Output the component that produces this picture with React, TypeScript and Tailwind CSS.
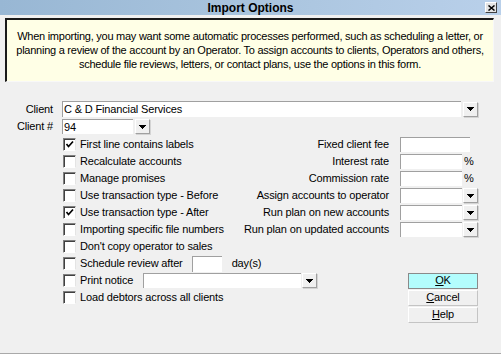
import React from 'react';

const font = "font-['Liberation_Sans',Arial,sans-serif]";

function Arrow() {
  return (
    <svg width="7" height="4" viewBox="0 0 7 4" shapeRendering="crispEdges">
      <path d="M0 0h7v1H0z M1 1h5v1H1z M2 2h3v1H2z M3 3h1v1H3z" fill="#000" />
    </svg>
  );
}

function DropBtn() {
  return (
    <div className="w-[15px] h-[15px] shrink-0 flex items-center justify-center bg-[#f0f0f0] border-t border-l border-white border-b border-r border-b-[#a0a0a0] border-r-[#a0a0a0] shadow-[1px_1px_0_#d4d4d4]">
      <Arrow />
    </div>
  );
}

function TextBox({ w, h = 15, value }: { w: number; h?: number; value?: string }) {
  return (
    <div
      className="shrink-0 bg-white border-t border-l border-[#a0a0a0] flex items-center pl-[1px] text-[11px] leading-none whitespace-nowrap overflow-hidden"
      style={{ width: w, height: h }}
    >
      {value}
    </div>
  );
}

function Combo({ w, value }: { w: number; value?: string }) {
  return (
    <div className="flex items-center gap-[1px] shrink-0">
      <TextBox w={w} value={value} />
      <DropBtn />
    </div>
  );
}

function Checkbox({ checked }: { checked?: boolean }) {
  return (
    <div className="w-[13px] h-[13px] shrink-0 bg-white border-t border-l border-[#808080] border-b border-r border-b-white border-r-[#e4e4e4] shadow-[inset_1px_1px_0_#404040] flex items-center justify-center">
      {checked && (
        <svg width="9" height="9" viewBox="0 0 9 9">
          <polyline points="1.5,4 3.5,6.5 8,1.5" fill="none" stroke="#000" strokeWidth="1.7" />
        </svg>
      )}
    </div>
  );
}

function CheckRow({ label, checked, children }: { label: string; checked?: boolean; children?: React.ReactNode }) {
  return (
    <div className="flex-1 flex items-center pl-[63px] whitespace-nowrap">
      <Checkbox checked={checked} />
      <span className="ml-[4px]">{label}</span>
      {children}
    </div>
  );
}

function RightField({ label, children }: { label: string; children: React.ReactNode }) {
  return (
    <div className="w-[266px] flex items-center justify-end pr-[23px]">
      <span className="whitespace-nowrap mr-[11px]">{label}</span>
      <div className="w-[78px] flex items-center">{children}</div>
    </div>
  );
}

function Btn({ label, hot, active }: { label: string; hot: string; active?: boolean }) {
  const rest = label.slice(1);
  return (
    <div className="w-[266px] flex justify-end pr-[23px]">
      <button
        type="button"
        className={`w-[70px] h-[16px] flex items-center justify-center text-[11px] leading-none border ${
          active ? 'bg-[#b3fdfd] border-[#8a8a8a]' : 'bg-[#f0f0f0] border-[#c4c4c4] border-t-white border-l-white'
        }`}
      >
        <span className="underline underline-offset-1">{hot}</span>
        {rest}
      </button>
    </div>
  );
}

export default function App() {
  return (
    <div className={`w-[501px] h-[354px] bg-[#f0f0f0] text-black text-[11px] tracking-[-0.15px] border-b border-[#a9a9a9] flex flex-col ${font}`}>
      {/* title bar */}
      <div className="h-[15px] flex items-center bg-linear-to-r from-[#98b7d4] via-[#a9c4de] to-[#b9d0ea]">
        <div className="w-[16px]" />
        <div className="flex-1 text-center font-bold text-[12px] leading-none tracking-normal">Import Options</div>
        <div className="w-[12px] h-[11px] mr-[4px] bg-[#e4e4e4] border border-t-white border-l-white border-b-[#404040] border-r-[#404040] flex items-center justify-center">
          <svg width="7" height="6" viewBox="0 0 7 6">
            <path d="M0.5 0.5 L6.5 5.5 M6.5 0.5 L0.5 5.5" stroke="#000" strokeWidth="1.5" />
          </svg>
        </div>
      </div>

      {/* info box */}
      <div className="mt-[3px] ml-[5px] mr-[7px] h-[64px] bg-[#ffffe6] border-t-2 border-l-2 border-[#1a1a1a] border-b border-r border-b-[#f8f8f8] border-r-[#f8f8f8] text-center leading-[14px] pt-[9px] tracking-[-0.25px] whitespace-nowrap">
        When importing, you may want some automatic processes performed, such as scheduling a letter, or
        <br />
        planning a review of the account by an Operator. To assign accounts to clients, Operators and others,
        <br />
        schedule file reviews, letters, or contact plans, use the options in this form.
      </div>

      {/* client rows */}
      <div className="mt-[19px] h-[16px] flex items-center">
        <span className="w-[53px] text-right">Client</span>
        <div className="ml-[9px] flex items-center gap-[2px]">
          <TextBox w={399} h={16} value="C & D Financial Services" />
          <DropBtn />
        </div>
      </div>
      <div className="mt-[2px] h-[15px] flex items-center">
        <span className="w-[53px] text-right">Client #</span>
        <div className="ml-[9px] flex items-center gap-[2px]">
          <TextBox w={71} value="94" />
          <DropBtn />
        </div>
      </div>

      {/* options */}
      <div className="mt-[2px] flex flex-col">
        <div className="h-[17px] flex items-center">
          <CheckRow label="First line contains labels" checked />
          <RightField label="Fixed client fee">
            <TextBox w={70} />
          </RightField>
        </div>
        <div className="h-[17px] flex items-center">
          <CheckRow label="Recalculate accounts" />
          <RightField label="Interest rate">
            <TextBox w={62} />
            <span className="ml-[2px]">%</span>
          </RightField>
        </div>
        <div className="h-[17px] flex items-center">
          <CheckRow label="Manage promises" />
          <RightField label="Commission rate">
            <TextBox w={62} />
            <span className="ml-[2px]">%</span>
          </RightField>
        </div>
        <div className="h-[17px] flex items-center">
          <CheckRow label="Use transaction type - Before" />
          <RightField label="Assign accounts to operator">
            <Combo w={62} />
          </RightField>
        </div>
        <div className="h-[17px] flex items-center">
          <CheckRow label="Use transaction type - After" checked />
          <RightField label="Run plan on new accounts">
            <Combo w={62} />
          </RightField>
        </div>
        <div className="h-[17px] flex items-center">
          <CheckRow label="Importing specific file numbers" />
          <RightField label="Run plan on updated accounts">
            <Combo w={62} />
          </RightField>
        </div>
        <div className="h-[17px] flex items-center">
          <CheckRow label="Don't copy operator to sales" />
        </div>
        <div className="h-[17px] flex items-center">
          <CheckRow label="Schedule review after">
            <div className="ml-[9px]">
              <TextBox w={30} h={16} />
            </div>
            <span className="ml-[10px]">day(s)</span>
          </CheckRow>
        </div>
        <div className="h-[17px] flex items-center">
          <CheckRow label="Print notice">
            <div className="ml-[10px]">
              <Combo w={158} />
            </div>
          </CheckRow>
          <Btn label="OK" hot="O" active />
        </div>
        <div className="h-[17px] flex items-center">
          <CheckRow label="Load debtors across all clients" />
          <Btn label="Cancel" hot="C" />
        </div>
        <div className="h-[17px] flex items-center">
          <div className="flex-1" />
          <Btn label="Help" hot="H" />
        </div>
      </div>
    </div>
  );
}
